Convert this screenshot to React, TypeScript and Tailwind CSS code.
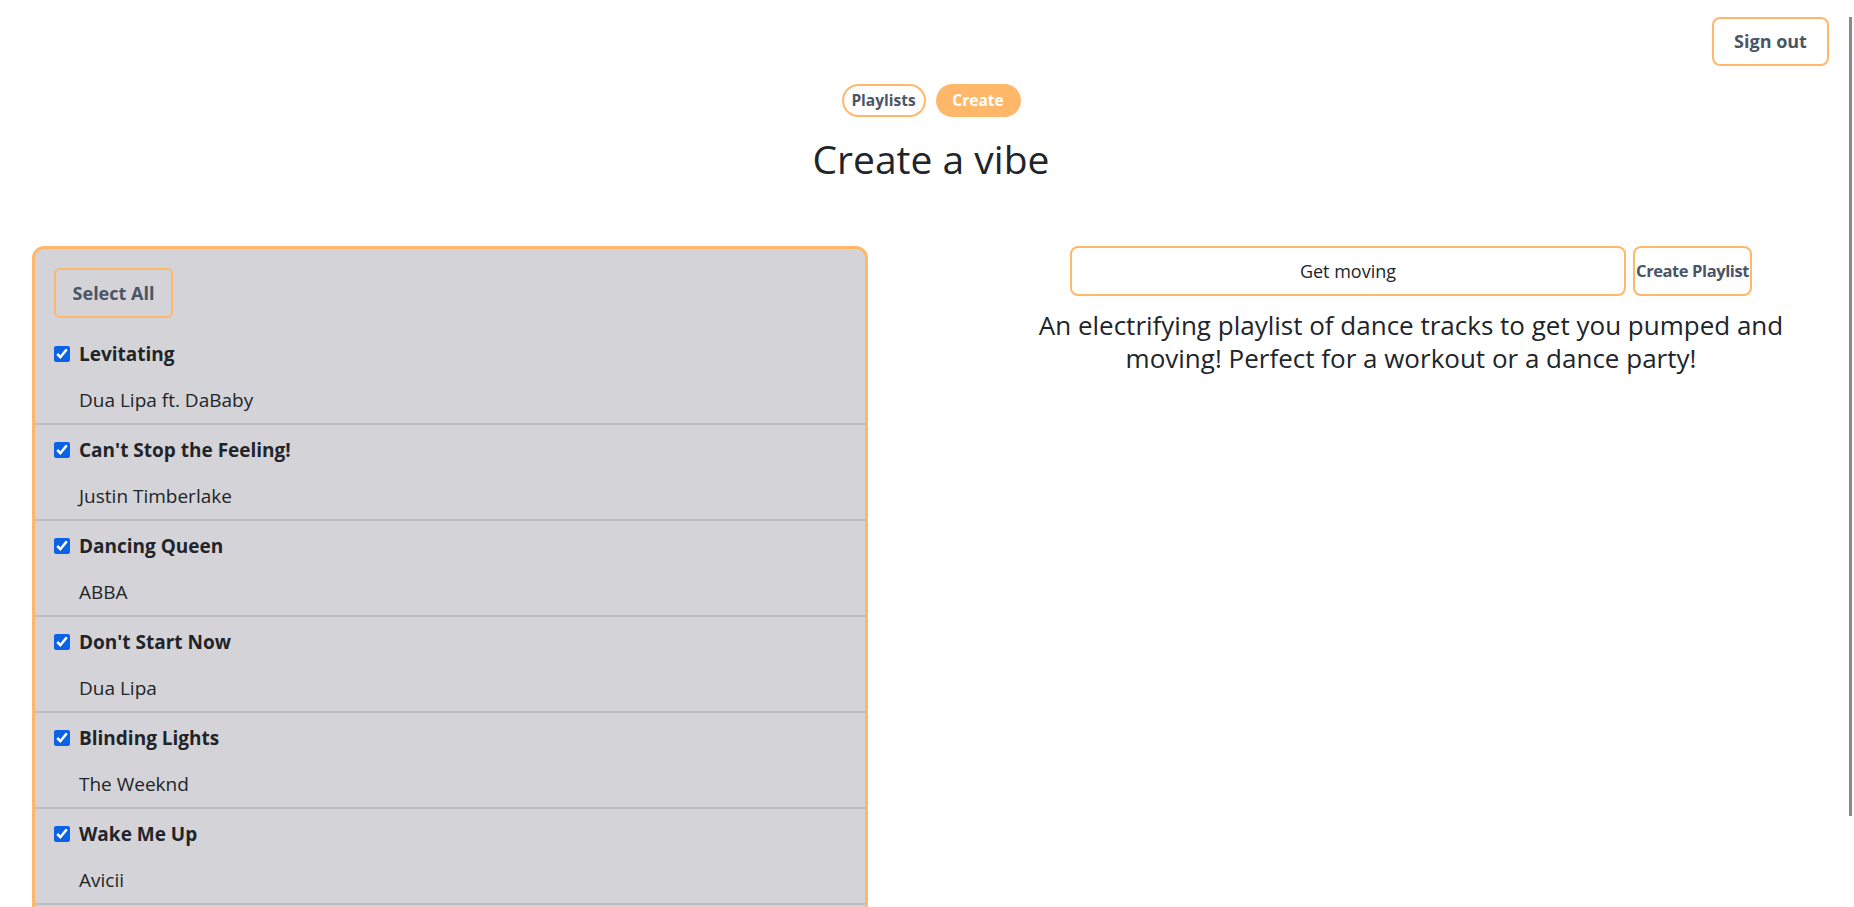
import React, { useState } from "react";

type Song = { title: string; artist: string };

const songs: Song[] = [
  { title: "Levitating", artist: "Dua Lipa ft. DaBaby" },
  { title: "Can't Stop the Feeling!", artist: "Justin Timberlake" },
  { title: "Dancing Queen", artist: "ABBA" },
  { title: "Don't Start Now", artist: "Dua Lipa" },
  { title: "Blinding Lights", artist: "The Weeknd" },
  { title: "Wake Me Up", artist: "Avicii" },
  { title: "Uptown Funk", artist: "Mark Ronson ft. Bruno Mars" },
  { title: "Shut Up and Dance", artist: "Walk the Moon" },
];

const font = { fontFamily: '"Open Sans", "Noto Sans", sans-serif' };

const SongRow: React.FC<{ song: Song; checked: boolean; onToggle: () => void }> = ({
  song,
  checked,
  onToggle,
}) => {
  return (
    <div className="border-b-2 border-[#bebdc3] px-[19px] pt-[11px] pb-[9px]">
      <label className="flex items-center h-7 gap-[9px]">
        <input
          type="checkbox"
          checked={checked}
          onChange={onToggle}
          className="w-4 h-4 m-0 accent-[#0b62e4]"
        />
        <span className="text-[19px] font-bold text-[#212529]">{song.title}</span>
      </label>
      <div className="mt-[18px] h-7 pl-[25px] text-[19px] leading-7 text-[#212529]">
        {song.artist}
      </div>
    </div>
  );
};

export default function App() {
  const [checked, setChecked] = useState<boolean[]>(songs.map(() => true));
  const [name, setName] = useState("Get moving");

  return (
    <div className="relative h-screen overflow-hidden bg-white" style={font}>
      <div className="flex justify-end pt-[17px] pr-[25px]">
        <button className="w-[117px] h-[49px] rounded-lg border-2 border-orange-300 text-[18px] font-bold text-[#4a5568]">
          Sign out
        </button>
      </div>

      <div className="flex justify-center gap-[10px] mt-[18px] pl-2">
        <button className="w-[84px] h-[33px] rounded-full border-2 border-orange-300 text-[15.5px] font-bold text-[#4a5568]">
          Playlists
        </button>
        <button className="w-[85px] h-[33px] rounded-full bg-orange-300 text-[15.5px] font-bold text-white">
          Create
        </button>
      </div>

      <h1 className="mt-[18px] pl-2 text-center text-[39px] leading-[48px] text-[#212529]">
        Create a vibe
      </h1>

      <div className="grid grid-cols-[836px_834px] gap-[126px] pl-[32px] mt-[63px]">
        <div className="rounded-xl border-[3px] border-orange-300 bg-[#d4d3d8] overflow-hidden">
          <div className="px-[19px] pt-[19px] pb-[11px]">
            <button
              onClick={() => setChecked(songs.map(() => true))}
              className="w-[119px] h-[50px] rounded-md border-2 border-orange-300 text-[18px] font-bold text-[#4a5568]"
            >
              Select All
            </button>
          </div>
          {songs.map((s, i) => (
            <SongRow
              key={s.title}
              song={s}
              checked={checked[i]}
              onToggle={() =>
                setChecked(checked.map((c, j) => (j === i ? !c : c)))
              }
            />
          ))}
        </div>

        <div className="flex flex-col items-center">
          <div className="flex gap-[7px]">
            <input
              value={name}
              onChange={(e) => setName(e.target.value)}
              className="w-[556px] h-[50px] rounded-lg border-2 border-orange-300 text-center text-[18px] text-[#212529] focus:outline-none"
            />
            <button className="w-[119px] h-[50px] rounded-lg border-2 border-orange-300 px-0 text-[16.5px] font-bold tracking-tight text-[#4a5568] whitespace-nowrap">
              Create Playlist
            </button>
          </div>
          <p className="mt-[13px] max-w-[800px] text-center text-[26px] leading-[33px] text-[#212529]">
            An electrifying playlist of dance tracks to get you pumped and
            moving! Perfect for a workout or a dance party!
          </p>
        </div>
      </div>

      <div className="absolute right-[2px] top-[17px] h-[799px] w-[3px] bg-[#8a8a8a]" />
    </div>
  );
}
